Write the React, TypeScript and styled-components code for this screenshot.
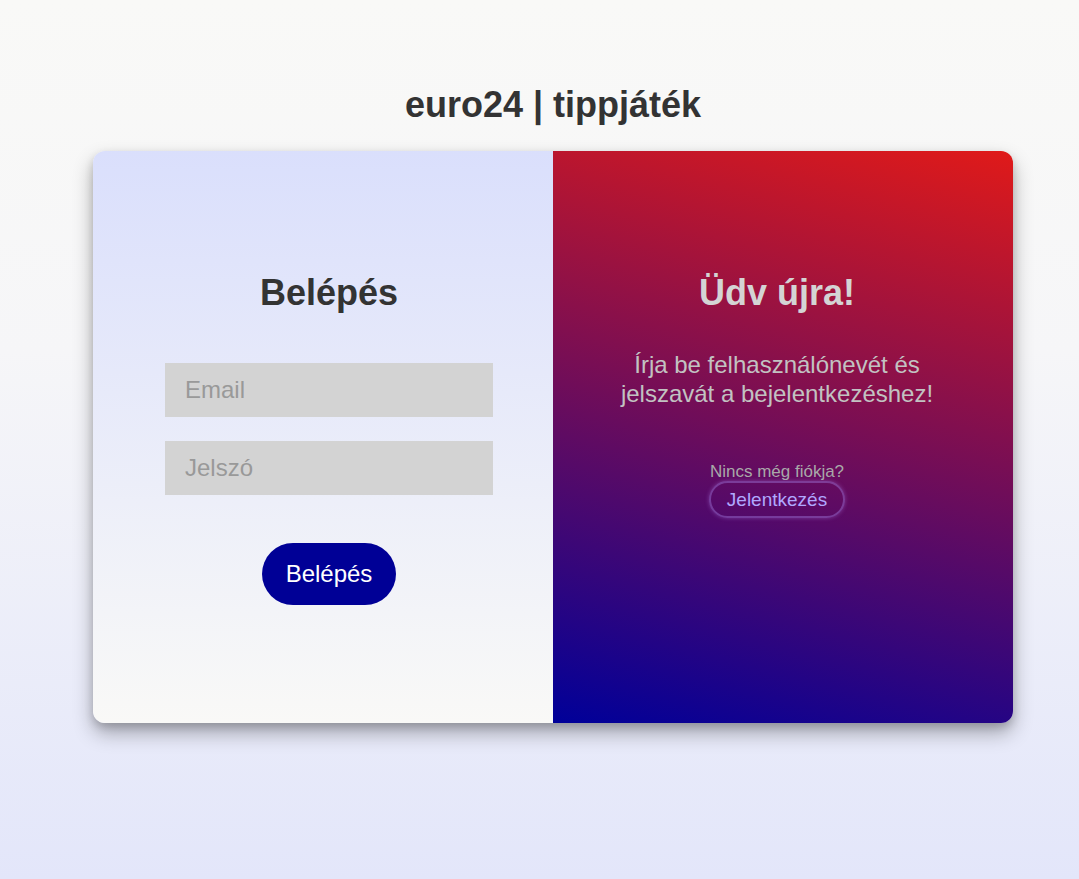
import React from "react";
import styled, { createGlobalStyle } from "styled-components";

const Global = createGlobalStyle`
  html, body { margin: 0; padding: 0; }
  body {
    min-height: 879px;
    font-family: "Liberation Sans", Arial, sans-serif;
    background: linear-gradient(to bottom, #f9f9f7 0%, #f6f6f8 40%, #e3e6fa 100%);
  }
`;

const Page = styled.div`
  display: flex;
  flex-direction: column;
  align-items: center;
  padding: 83px 0 0 27px;
  min-height: 879px;
  box-sizing: border-box;
`;

const Title = styled.h1`
  margin: 0 0 24px;
  font-size: 36px;
  font-weight: 700;
  color: #333;
  line-height: 44px;
`;

const Card = styled.div`
  width: 920px;
  height: 572px;
  display: grid;
  grid-template-columns: 1fr 1fr;
  border-radius: 12px;
  overflow: hidden;
  box-shadow: 0 10px 20px rgba(0, 0, 0, 0.3), 0 4px 8px rgba(0, 0, 0, 0.15);
`;

const LeftPanel = styled.form`
  background: linear-gradient(to bottom, #dadffc 0%, #f9f9f7 100%);
  display: flex;
  flex-direction: column;
  align-items: center;
  padding: 120px 0 0 12px;
  box-sizing: border-box;
`;

const RightPanel = styled.div`
  background: linear-gradient(14deg, #000099 0%, #e01a19 100%);
  display: flex;
  flex-direction: column;
  align-items: center;
  padding: 120px 12px 0 0;
  box-sizing: border-box;
`;

const Heading = styled.h2<{ $light?: boolean }>`
  margin: 0;
  font-size: 36px;
  font-weight: 700;
  line-height: 44px;
  color: ${(p) => (p.$light ? "#d4d4d4" : "#333")};
`;

const Input = styled.input<{ $mt: number }>`
  width: 328px;
  height: 54px;
  box-sizing: border-box;
  border: none;
  outline: none;
  background: #d3d3d3;
  padding: 0 20px;
  font-family: "Liberation Sans", Arial, sans-serif;
  font-size: 24px;
  color: #333;
  margin-top: ${(p) => p.$mt}px;
  &::placeholder { color: #999; }
`;

const PrimaryButton = styled.button`
  margin-top: 48px;
  width: 134px;
  height: 62px;
  border: none;
  border-radius: 31px;
  background: #000096;
  color: #fff;
  font-family: "Liberation Sans", Arial, sans-serif;
  font-size: 24px;
  cursor: pointer;
`;

const Lead = styled.p`
  margin: 35px 0 0;
  text-align: center;
  font-size: 24px;
  line-height: 29px;
  color: #c2c2c2;
`;

const Small = styled.div`
  margin-top: 54px;
  font-size: 17px;
  color: #a9a9a9;
  line-height: 19px;
`;

const GhostButton = styled.button`
  margin-top: 0;
  width: 136px;
  height: 37px;
  border-radius: 19px;
  border: 2px solid rgba(160, 120, 220, 0.45);
  background: transparent;
  box-shadow: 0 0 4px rgba(190, 150, 255, 0.35);
  color: #b0a8ff;
  font-family: "Liberation Sans", Arial, sans-serif;
  font-size: 19px;
  cursor: pointer;
`;

export default function App() {
  return (
    <>
      <Global />
      <Page>
        <Title>euro24 | tippjáték</Title>
        <Card>
          <LeftPanel onSubmit={(e) => e.preventDefault()}>
            <Heading>Belépés</Heading>
            <Input $mt={48} type="email" placeholder="Email" />
            <Input $mt={24} type="password" placeholder="Jelszó" />
            <PrimaryButton type="submit">Belépés</PrimaryButton>
          </LeftPanel>
          <RightPanel>
            <Heading $light>Üdv újra!</Heading>
            <Lead>
              Írja be felhasználónevét és
              <br />
              jelszavát a bejelentkezéshez!
            </Lead>
            <Small>Nincs még fiókja?</Small>
            <GhostButton type="button">Jelentkezés</GhostButton>
          </RightPanel>
        </Card>
      </Page>
    </>
  );
}
